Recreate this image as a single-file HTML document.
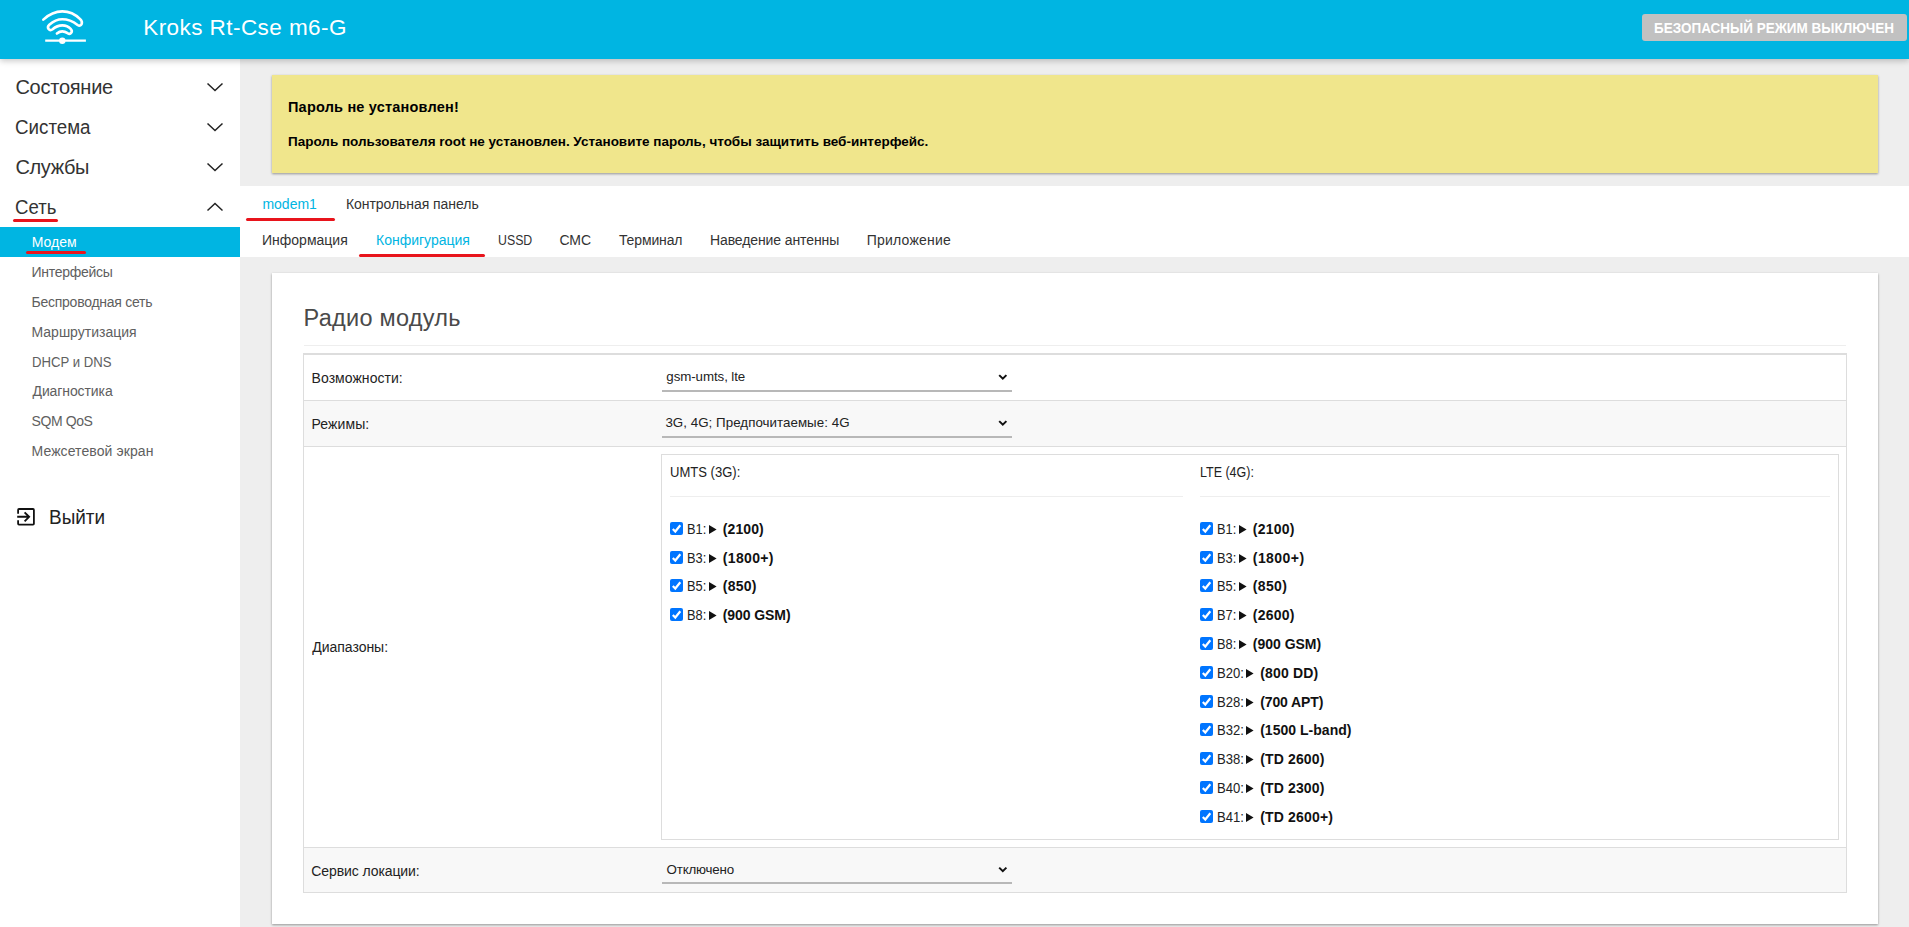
<!DOCTYPE html>
<html><head><meta charset="utf-8">
<style>
*{box-sizing:border-box;margin:0;padding:0}
html,body{width:1909px;height:927px;overflow:hidden;background:#eeeeee;font-family:"Liberation Sans",sans-serif;color:#333;position:relative}
.b{position:absolute}
.t{position:absolute;white-space:nowrap;line-height:0;font-family:"Liberation Sans",sans-serif;z-index:10}
#hdr{position:absolute;left:0;top:0;width:1909px;height:59px;background:#00b5e2;z-index:6;box-shadow:0 2px 6px rgba(0,0,0,.22)}
#side{position:absolute;left:0;top:59px;width:240px;height:868px;background:#fff;z-index:2}
#band{position:absolute;left:240px;top:186px;width:1669px;height:71px;background:#fff}
#alert{position:absolute;left:272px;top:75px;width:1606px;height:98px;background:#f0e68c;box-shadow:0 1px 3px rgba(0,0,0,.14),0 1px 2px rgba(0,0,0,.26)}
#card{position:absolute;left:272px;top:273px;width:1606px;height:651px;background:#fff;box-shadow:0 1px 3px rgba(0,0,0,.14),0 1px 2px rgba(0,0,0,.26)}
.red{position:absolute;height:3px;background:#e8141c;border-radius:1.5px;z-index:12}
.cb{position:absolute;width:13px;height:13px;background:#0075ff;border-radius:2px;z-index:10}
.cb svg{position:absolute;left:0;top:0}
.tri{position:absolute;width:8px;height:9px;z-index:10}.tri svg{position:absolute;left:0;top:0}
.hl{position:absolute;height:1px;background:#ddd}
.vl{position:absolute;width:1px;background:#ddd}
</style></head><body>
<div id="hdr">
  <svg class="b" style="left:0;top:0" width="120" height="59" viewBox="0 0 120 59">
    <path d="M43.3,19.6 C50,13.5 56,11.4 62.3,11.4 C69,11.4 75,14 80.2,19.2 C83.6,22.6 81.3,27.4 77.6,25 C72,20.7 67,19.3 62.3,19.3 C57,19.3 53,21.5 49.3,24.8 C46.3,27.5 49.2,32 52.6,29.3 C55.5,26.8 59,25.4 62.3,25.4 C65.5,25.4 68.6,26.6 70.7,28.8 C73.3,31.6 70.6,35.3 67.6,33.2 C65.6,31.9 64,31.4 62.3,31.4 C60,31.4 58.5,32.2 56.9,33.5" fill="none" stroke="#fff" stroke-width="2.6" stroke-linecap="round" stroke-linejoin="round"/>
    <line x1="45.2" y1="40.7" x2="85.9" y2="40.7" stroke="#fff" stroke-width="2.2"/>
    <circle cx="62.3" cy="40.7" r="3.2" fill="#fff"/>
  </svg>
  <div class="b" style="left:1642px;top:14px;width:265px;height:27px;background:#c1c1c1;border-radius:3px"></div>
</div>

<div id="side">
  <svg class="b" style="left:205px;top:20px" width="20" height="140" viewBox="0 0 20 140">
    <polyline points="2.5,4.5 10,11.5 17.5,4.5" fill="none" stroke="#222" stroke-width="1.5"/>
    <polyline points="2.5,44.5 10,51.5 17.5,44.5" fill="none" stroke="#222" stroke-width="1.5"/>
    <polyline points="2.5,84.5 10,91.5 17.5,84.5" fill="none" stroke="#222" stroke-width="1.5"/>
    <polyline points="2.5,131.5 10,124.5 17.5,131.5" fill="none" stroke="#222" stroke-width="1.5"/>
  </svg>
  <div class="b" style="left:0;top:168px;width:240px;height:30px;background:#00b5e2"></div>
  <svg class="b" style="left:0;top:441px" width="40" height="40" viewBox="0 500 40 40">
    <path d="M18.1,513.8 V509.9 Q18.1,509 19,509 H33 Q33.9,509 33.9,509.9 V523.8 Q33.9,524.7 33,524.7 H19 Q18.1,524.7 18.1,523.8 V520.2" fill="none" stroke="#111" stroke-width="1.8"/>
    <path d="M17.2,516.8 H29 M24.6,512.3 L29.1,516.8 L24.6,521.3" fill="none" stroke="#111" stroke-width="1.9"/>
  </svg>
</div>
<div class="red" style="left:13px;top:219px;width:45px"></div>
<div class="red" style="left:26px;top:251px;width:60px"></div>

<div id="alert"></div>
<div id="band"></div>
<div class="red" style="left:246px;top:218px;width:89px"></div>
<div class="red" style="left:359px;top:254px;width:126px"></div>

<div id="card"></div>
<!-- heading hr -->
<div class="b" style="left:304px;top:345px;width:1542px;height:1px;background:#eee"></div>
<!-- table -->
<div class="b" style="left:303px;top:353px;width:1544px;height:540px;border:1px solid #ddd;border-top-width:2px"></div>
<div class="b" style="left:304px;top:401px;width:1542px;height:45px;background:#f8f8f8"></div>
<div class="b" style="left:304px;top:848px;width:1542px;height:44px;background:#f8f8f8"></div>
<div class="hl" style="left:304px;top:400px;width:1542px"></div>
<div class="hl" style="left:304px;top:446px;width:1542px"></div>
<div class="hl" style="left:304px;top:847px;width:1542px"></div>
<!-- selects -->
<div class="b" style="left:662px;top:390px;width:350px;height:2px;background:#b8b8b8"></div>
<div class="b" style="left:662px;top:436px;width:350px;height:2px;background:#b8b8b8"></div>
<div class="b" style="left:662px;top:882px;width:350px;height:2px;background:#b8b8b8"></div>
<svg class="b" style="left:990px;top:360px" width="30" height="530" viewBox="990 360 30 530">
  <polyline points="999.2,375.1 1002.8,378.7 1006.4,375.1" fill="none" stroke="#111" stroke-width="2"/>
  <polyline points="999.2,421.1 1002.8,424.7 1006.4,421.1" fill="none" stroke="#111" stroke-width="2"/>
  <polyline points="999.2,867.6 1002.8,871.2 1006.4,867.6" fill="none" stroke="#111" stroke-width="2"/>
</svg>
<!-- inner box -->
<div class="b" style="left:661px;top:454px;width:1178px;height:386px;border:1px solid #ddd"></div>
<div class="b" style="left:670px;top:496px;width:513px;height:1px;background:#eee"></div>
<div class="b" style="left:1200px;top:496px;width:630px;height:1px;background:#eee"></div>

<div class="t" style="left:143.20px;top:27.6px;font-size:22.5px;color:#fff;letter-spacing:0.438px">Kroks Rt-Cse m6-G</div>
<div class="t" style="left:1654.07px;top:28px;font-size:14.5px;color:#fff;font-weight:bold;transform:scaleX(0.9300);transform-origin:0 0">БЕЗОПАСНЫЙ РЕЖИМ ВЫКЛЮЧЕН</div>
<div class="t" style="left:15.40px;top:87px;font-size:20px;color:#333;letter-spacing:-0.250px">Состояние</div>
<div class="t" style="left:15.46px;top:127px;font-size:20px;color:#333;transform:scaleX(0.9375);transform-origin:0 0">Система</div>
<div class="t" style="left:15.40px;top:167px;font-size:20px;color:#333;letter-spacing:-0.340px">Службы</div>
<div class="t" style="left:15.47px;top:207px;font-size:20px;color:#333;transform:scaleX(0.9302);transform-origin:0 0">Сеть</div>
<div class="t" style="left:31.70px;top:242px;font-size:14px;color:#fff">Модем</div>
<div class="t" style="left:31.50px;top:272px;font-size:14px;color:#606060;letter-spacing:-0.278px">Интерфейсы</div>
<div class="t" style="left:31.50px;top:302px;font-size:14px;color:#606060;letter-spacing:-0.250px">Беспроводная сеть</div>
<div class="t" style="left:31.50px;top:332px;font-size:14px;color:#606060">Маршрутизация</div>
<div class="t" style="left:31.56px;top:362px;font-size:14px;color:#606060;transform:scaleX(0.9398);transform-origin:0 0">DHCP и DNS</div>
<div class="t" style="left:32.50px;top:391px;font-size:14px;color:#606060;letter-spacing:-0.100px">Диагностика</div>
<div class="t" style="left:31.50px;top:421px;font-size:14px;color:#606060;letter-spacing:-0.400px">SQM QoS</div>
<div class="t" style="left:31.50px;top:451px;font-size:14px;color:#606060;letter-spacing:0.093px">Межсетевой экран</div>
<div class="t" style="left:48.85px;top:517px;font-size:20px;color:#222;transform:scaleX(0.9474);transform-origin:0 0">Выйти</div>
<div class="t" style="left:288.00px;top:107px;font-size:14.5px;color:#000;font-weight:bold;letter-spacing:0.200px">Пароль не установлен!</div>
<div class="t" style="left:288.00px;top:142px;font-size:13.5px;color:#000;font-weight:bold;letter-spacing:-0.011px">Пароль пользователя root не установлен. Установите пароль, чтобы защитить веб-интерфейс.</div>
<div class="t" style="left:262.40px;top:204px;font-size:14px;color:#00b5e2">modem1</div>
<div class="t" style="left:346.00px;top:204px;font-size:14px;color:#333;letter-spacing:-0.059px">Контрольная панель</div>
<div class="t" style="left:262.00px;top:240px;font-size:14px;color:#333">Информация</div>
<div class="t" style="left:376.00px;top:240px;font-size:14px;color:#00b5e2">Конфигурация</div>
<div class="t" style="left:497.92px;top:240px;font-size:14px;color:#333;transform:scaleX(0.8811);transform-origin:0 0">USSD</div>
<div class="t" style="left:559.50px;top:240px;font-size:14px;color:#333;letter-spacing:-0.100px">СМС</div>
<div class="t" style="left:619.00px;top:240px;font-size:14px;color:#333;letter-spacing:-0.143px">Терминал</div>
<div class="t" style="left:710.00px;top:240px;font-size:14px;color:#333;letter-spacing:-0.106px">Наведение антенны</div>
<div class="t" style="left:866.80px;top:240px;font-size:14px;color:#333;letter-spacing:0.200px">Приложение</div>
<div class="t" style="left:303.50px;top:318px;font-size:23.5px;color:#4a4a4a;letter-spacing:0.273px">Радио модуль</div>
<div class="t" style="left:311.60px;top:378px;font-size:14px;color:#222;letter-spacing:0.045px">Возможности:</div>
<div class="t" style="left:311.40px;top:424px;font-size:14px;color:#222;letter-spacing:0.117px">Режимы:</div>
<div class="t" style="left:312.30px;top:647px;font-size:14px;color:#222;letter-spacing:-0.033px">Диапазоны:</div>
<div class="t" style="left:311.30px;top:871px;font-size:14px;color:#222;letter-spacing:-0.093px">Сервис локации:</div>
<div class="t" style="left:666.30px;top:377px;font-size:13.33px;color:#222;letter-spacing:-0.083px">gsm-umts, lte</div>
<div class="t" style="left:665.40px;top:423px;font-size:13.33px;color:#222;letter-spacing:0.040px">3G, 4G; Предпочитаемые: 4G</div>
<div class="t" style="left:666.60px;top:870px;font-size:13.33px;color:#222;letter-spacing:-0.188px">Отключено</div>
<div class="t" style="left:670.07px;top:472px;font-size:14px;color:#222;transform:scaleX(0.9315);transform-origin:0 0">UMTS (3G):</div>
<div class="t" style="left:1199.61px;top:472px;font-size:14px;color:#222;transform:scaleX(0.8914);transform-origin:0 0">LTE (4G):</div>
<div class="cb" style="left:670px;top:522px"><svg width="13" height="13" viewBox="0 0 13 13"><polyline points="2.8,7.0 5.3,9.5 10.3,3.3" fill="none" stroke="#fff" stroke-width="2.2"/></svg></div>
<div class="t" style="left:686.78px;top:529px;font-size:14px;color:#222;transform:scaleX(0.9158);transform-origin:0 0">B1:</div>
<div class="tri" style="left:708.8px;top:525.2px"><svg width="8" height="9" viewBox="0 0 8 9"><polygon points="0,0 7.6,4.45 0,8.9" fill="#111"/></svg></div>
<div class="t" style="left:722.80px;top:529px;font-size:14px;color:#111;font-weight:bold;letter-spacing:0.100px">(2100)</div>
<div class="cb" style="left:670px;top:551px"><svg width="13" height="13" viewBox="0 0 13 13"><polyline points="2.8,7.0 5.3,9.5 10.3,3.3" fill="none" stroke="#fff" stroke-width="2.2"/></svg></div>
<div class="t" style="left:686.78px;top:558px;font-size:14px;color:#222;transform:scaleX(0.9158);transform-origin:0 0">B3:</div>
<div class="tri" style="left:708.8px;top:554.2px"><svg width="8" height="9" viewBox="0 0 8 9"><polygon points="0,0 7.6,4.45 0,8.9" fill="#111"/></svg></div>
<div class="t" style="left:722.80px;top:558px;font-size:14px;color:#111;font-weight:bold;letter-spacing:0.333px">(1800+)</div>
<div class="cb" style="left:670px;top:579px"><svg width="13" height="13" viewBox="0 0 13 13"><polyline points="2.8,7.0 5.3,9.5 10.3,3.3" fill="none" stroke="#fff" stroke-width="2.2"/></svg></div>
<div class="t" style="left:686.78px;top:586px;font-size:14px;color:#222;transform:scaleX(0.9158);transform-origin:0 0">B5:</div>
<div class="tri" style="left:708.8px;top:582.2px"><svg width="8" height="9" viewBox="0 0 8 9"><polygon points="0,0 7.6,4.45 0,8.9" fill="#111"/></svg></div>
<div class="t" style="left:722.80px;top:586px;font-size:14px;color:#111;font-weight:bold;letter-spacing:0.250px">(850)</div>
<div class="cb" style="left:670px;top:608px"><svg width="13" height="13" viewBox="0 0 13 13"><polyline points="2.8,7.0 5.3,9.5 10.3,3.3" fill="none" stroke="#fff" stroke-width="2.2"/></svg></div>
<div class="t" style="left:686.78px;top:615px;font-size:14px;color:#222;transform:scaleX(0.9158);transform-origin:0 0">B8:</div>
<div class="tri" style="left:708.8px;top:611.2px"><svg width="8" height="9" viewBox="0 0 8 9"><polygon points="0,0 7.6,4.45 0,8.9" fill="#111"/></svg></div>
<div class="t" style="left:722.80px;top:615px;font-size:14px;color:#111;font-weight:bold;letter-spacing:-0.088px">(900 GSM)</div>
<div class="cb" style="left:1200px;top:522px"><svg width="13" height="13" viewBox="0 0 13 13"><polyline points="2.8,7.0 5.3,9.5 10.3,3.3" fill="none" stroke="#fff" stroke-width="2.2"/></svg></div>
<div class="t" style="left:1216.78px;top:529px;font-size:14px;color:#222;transform:scaleX(0.9158);transform-origin:0 0">B1:</div>
<div class="tri" style="left:1238.8px;top:525.2px"><svg width="8" height="9" viewBox="0 0 8 9"><polygon points="0,0 7.6,4.45 0,8.9" fill="#111"/></svg></div>
<div class="t" style="left:1252.80px;top:529px;font-size:14px;color:#111;font-weight:bold;letter-spacing:0.220px">(2100)</div>
<div class="cb" style="left:1200px;top:551px"><svg width="13" height="13" viewBox="0 0 13 13"><polyline points="2.8,7.0 5.3,9.5 10.3,3.3" fill="none" stroke="#fff" stroke-width="2.2"/></svg></div>
<div class="t" style="left:1216.78px;top:558px;font-size:14px;color:#222;transform:scaleX(0.9158);transform-origin:0 0">B3:</div>
<div class="tri" style="left:1238.8px;top:554.2px"><svg width="8" height="9" viewBox="0 0 8 9"><polygon points="0,0 7.6,4.45 0,8.9" fill="#111"/></svg></div>
<div class="t" style="left:1252.80px;top:558px;font-size:14px;color:#111;font-weight:bold;letter-spacing:0.433px">(1800+)</div>
<div class="cb" style="left:1200px;top:579px"><svg width="13" height="13" viewBox="0 0 13 13"><polyline points="2.8,7.0 5.3,9.5 10.3,3.3" fill="none" stroke="#fff" stroke-width="2.2"/></svg></div>
<div class="t" style="left:1216.78px;top:586px;font-size:14px;color:#222;transform:scaleX(0.9158);transform-origin:0 0">B5:</div>
<div class="tri" style="left:1238.8px;top:582.2px"><svg width="8" height="9" viewBox="0 0 8 9"><polygon points="0,0 7.6,4.45 0,8.9" fill="#111"/></svg></div>
<div class="t" style="left:1252.80px;top:586px;font-size:14px;color:#111;font-weight:bold;letter-spacing:0.350px">(850)</div>
<div class="cb" style="left:1200px;top:608px"><svg width="13" height="13" viewBox="0 0 13 13"><polyline points="2.8,7.0 5.3,9.5 10.3,3.3" fill="none" stroke="#fff" stroke-width="2.2"/></svg></div>
<div class="t" style="left:1216.78px;top:615px;font-size:14px;color:#222;transform:scaleX(0.9158);transform-origin:0 0">B7:</div>
<div class="tri" style="left:1238.8px;top:611.2px"><svg width="8" height="9" viewBox="0 0 8 9"><polygon points="0,0 7.6,4.45 0,8.9" fill="#111"/></svg></div>
<div class="t" style="left:1252.80px;top:615px;font-size:14px;color:#111;font-weight:bold;letter-spacing:0.220px">(2600)</div>
<div class="cb" style="left:1200px;top:637px"><svg width="13" height="13" viewBox="0 0 13 13"><polyline points="2.8,7.0 5.3,9.5 10.3,3.3" fill="none" stroke="#fff" stroke-width="2.2"/></svg></div>
<div class="t" style="left:1216.78px;top:644px;font-size:14px;color:#222;transform:scaleX(0.9158);transform-origin:0 0">B8:</div>
<div class="tri" style="left:1238.8px;top:640.2px"><svg width="8" height="9" viewBox="0 0 8 9"><polygon points="0,0 7.6,4.45 0,8.9" fill="#111"/></svg></div>
<div class="t" style="left:1252.80px;top:644px;font-size:14px;color:#111;font-weight:bold;letter-spacing:-0.012px">(900 GSM)</div>
<div class="cb" style="left:1200px;top:666px"><svg width="13" height="13" viewBox="0 0 13 13"><polyline points="2.8,7.0 5.3,9.5 10.3,3.3" fill="none" stroke="#fff" stroke-width="2.2"/></svg></div>
<div class="t" style="left:1216.77px;top:673px;font-size:14px;color:#222;transform:scaleX(0.9333);transform-origin:0 0">B20:</div>
<div class="tri" style="left:1246.3px;top:669.2px"><svg width="8" height="9" viewBox="0 0 8 9"><polygon points="0,0 7.6,4.45 0,8.9" fill="#111"/></svg></div>
<div class="t" style="left:1260.20px;top:673px;font-size:14px;color:#111;font-weight:bold;letter-spacing:0.157px">(800 DD)</div>
<div class="cb" style="left:1200px;top:695px"><svg width="13" height="13" viewBox="0 0 13 13"><polyline points="2.8,7.0 5.3,9.5 10.3,3.3" fill="none" stroke="#fff" stroke-width="2.2"/></svg></div>
<div class="t" style="left:1216.77px;top:702px;font-size:14px;color:#222;transform:scaleX(0.9333);transform-origin:0 0">B28:</div>
<div class="tri" style="left:1246.3px;top:698.2px"><svg width="8" height="9" viewBox="0 0 8 9"><polygon points="0,0 7.6,4.45 0,8.9" fill="#111"/></svg></div>
<div class="t" style="left:1260.20px;top:702px;font-size:14px;color:#111;font-weight:bold;letter-spacing:-0.112px">(700 APT)</div>
<div class="cb" style="left:1200px;top:723px"><svg width="13" height="13" viewBox="0 0 13 13"><polyline points="2.8,7.0 5.3,9.5 10.3,3.3" fill="none" stroke="#fff" stroke-width="2.2"/></svg></div>
<div class="t" style="left:1216.77px;top:730px;font-size:14px;color:#222;transform:scaleX(0.9333);transform-origin:0 0">B32:</div>
<div class="tri" style="left:1246.3px;top:726.2px"><svg width="8" height="9" viewBox="0 0 8 9"><polygon points="0,0 7.6,4.45 0,8.9" fill="#111"/></svg></div>
<div class="t" style="left:1260.20px;top:730px;font-size:14px;color:#111;font-weight:bold;letter-spacing:0.025px">(1500 L-band)</div>
<div class="cb" style="left:1200px;top:752px"><svg width="13" height="13" viewBox="0 0 13 13"><polyline points="2.8,7.0 5.3,9.5 10.3,3.3" fill="none" stroke="#fff" stroke-width="2.2"/></svg></div>
<div class="t" style="left:1216.77px;top:759px;font-size:14px;color:#222;transform:scaleX(0.9333);transform-origin:0 0">B38:</div>
<div class="tri" style="left:1246.3px;top:755.2px"><svg width="8" height="9" viewBox="0 0 8 9"><polygon points="0,0 7.6,4.45 0,8.9" fill="#111"/></svg></div>
<div class="t" style="left:1260.20px;top:759px;font-size:14px;color:#111;font-weight:bold;letter-spacing:0.138px">(TD 2600)</div>
<div class="cb" style="left:1200px;top:781px"><svg width="13" height="13" viewBox="0 0 13 13"><polyline points="2.8,7.0 5.3,9.5 10.3,3.3" fill="none" stroke="#fff" stroke-width="2.2"/></svg></div>
<div class="t" style="left:1216.77px;top:788px;font-size:14px;color:#222;transform:scaleX(0.9333);transform-origin:0 0">B40:</div>
<div class="tri" style="left:1246.3px;top:784.2px"><svg width="8" height="9" viewBox="0 0 8 9"><polygon points="0,0 7.6,4.45 0,8.9" fill="#111"/></svg></div>
<div class="t" style="left:1260.20px;top:788px;font-size:14px;color:#111;font-weight:bold;letter-spacing:0.138px">(TD 2300)</div>
<div class="cb" style="left:1200px;top:810px"><svg width="13" height="13" viewBox="0 0 13 13"><polyline points="2.8,7.0 5.3,9.5 10.3,3.3" fill="none" stroke="#fff" stroke-width="2.2"/></svg></div>
<div class="t" style="left:1216.77px;top:817px;font-size:14px;color:#222;transform:scaleX(0.9333);transform-origin:0 0">B41:</div>
<div class="tri" style="left:1246.3px;top:813.2px"><svg width="8" height="9" viewBox="0 0 8 9"><polygon points="0,0 7.6,4.45 0,8.9" fill="#111"/></svg></div>
<div class="t" style="left:1260.20px;top:817px;font-size:14px;color:#111;font-weight:bold;letter-spacing:0.178px">(TD 2600+)</div>
</body></html>
